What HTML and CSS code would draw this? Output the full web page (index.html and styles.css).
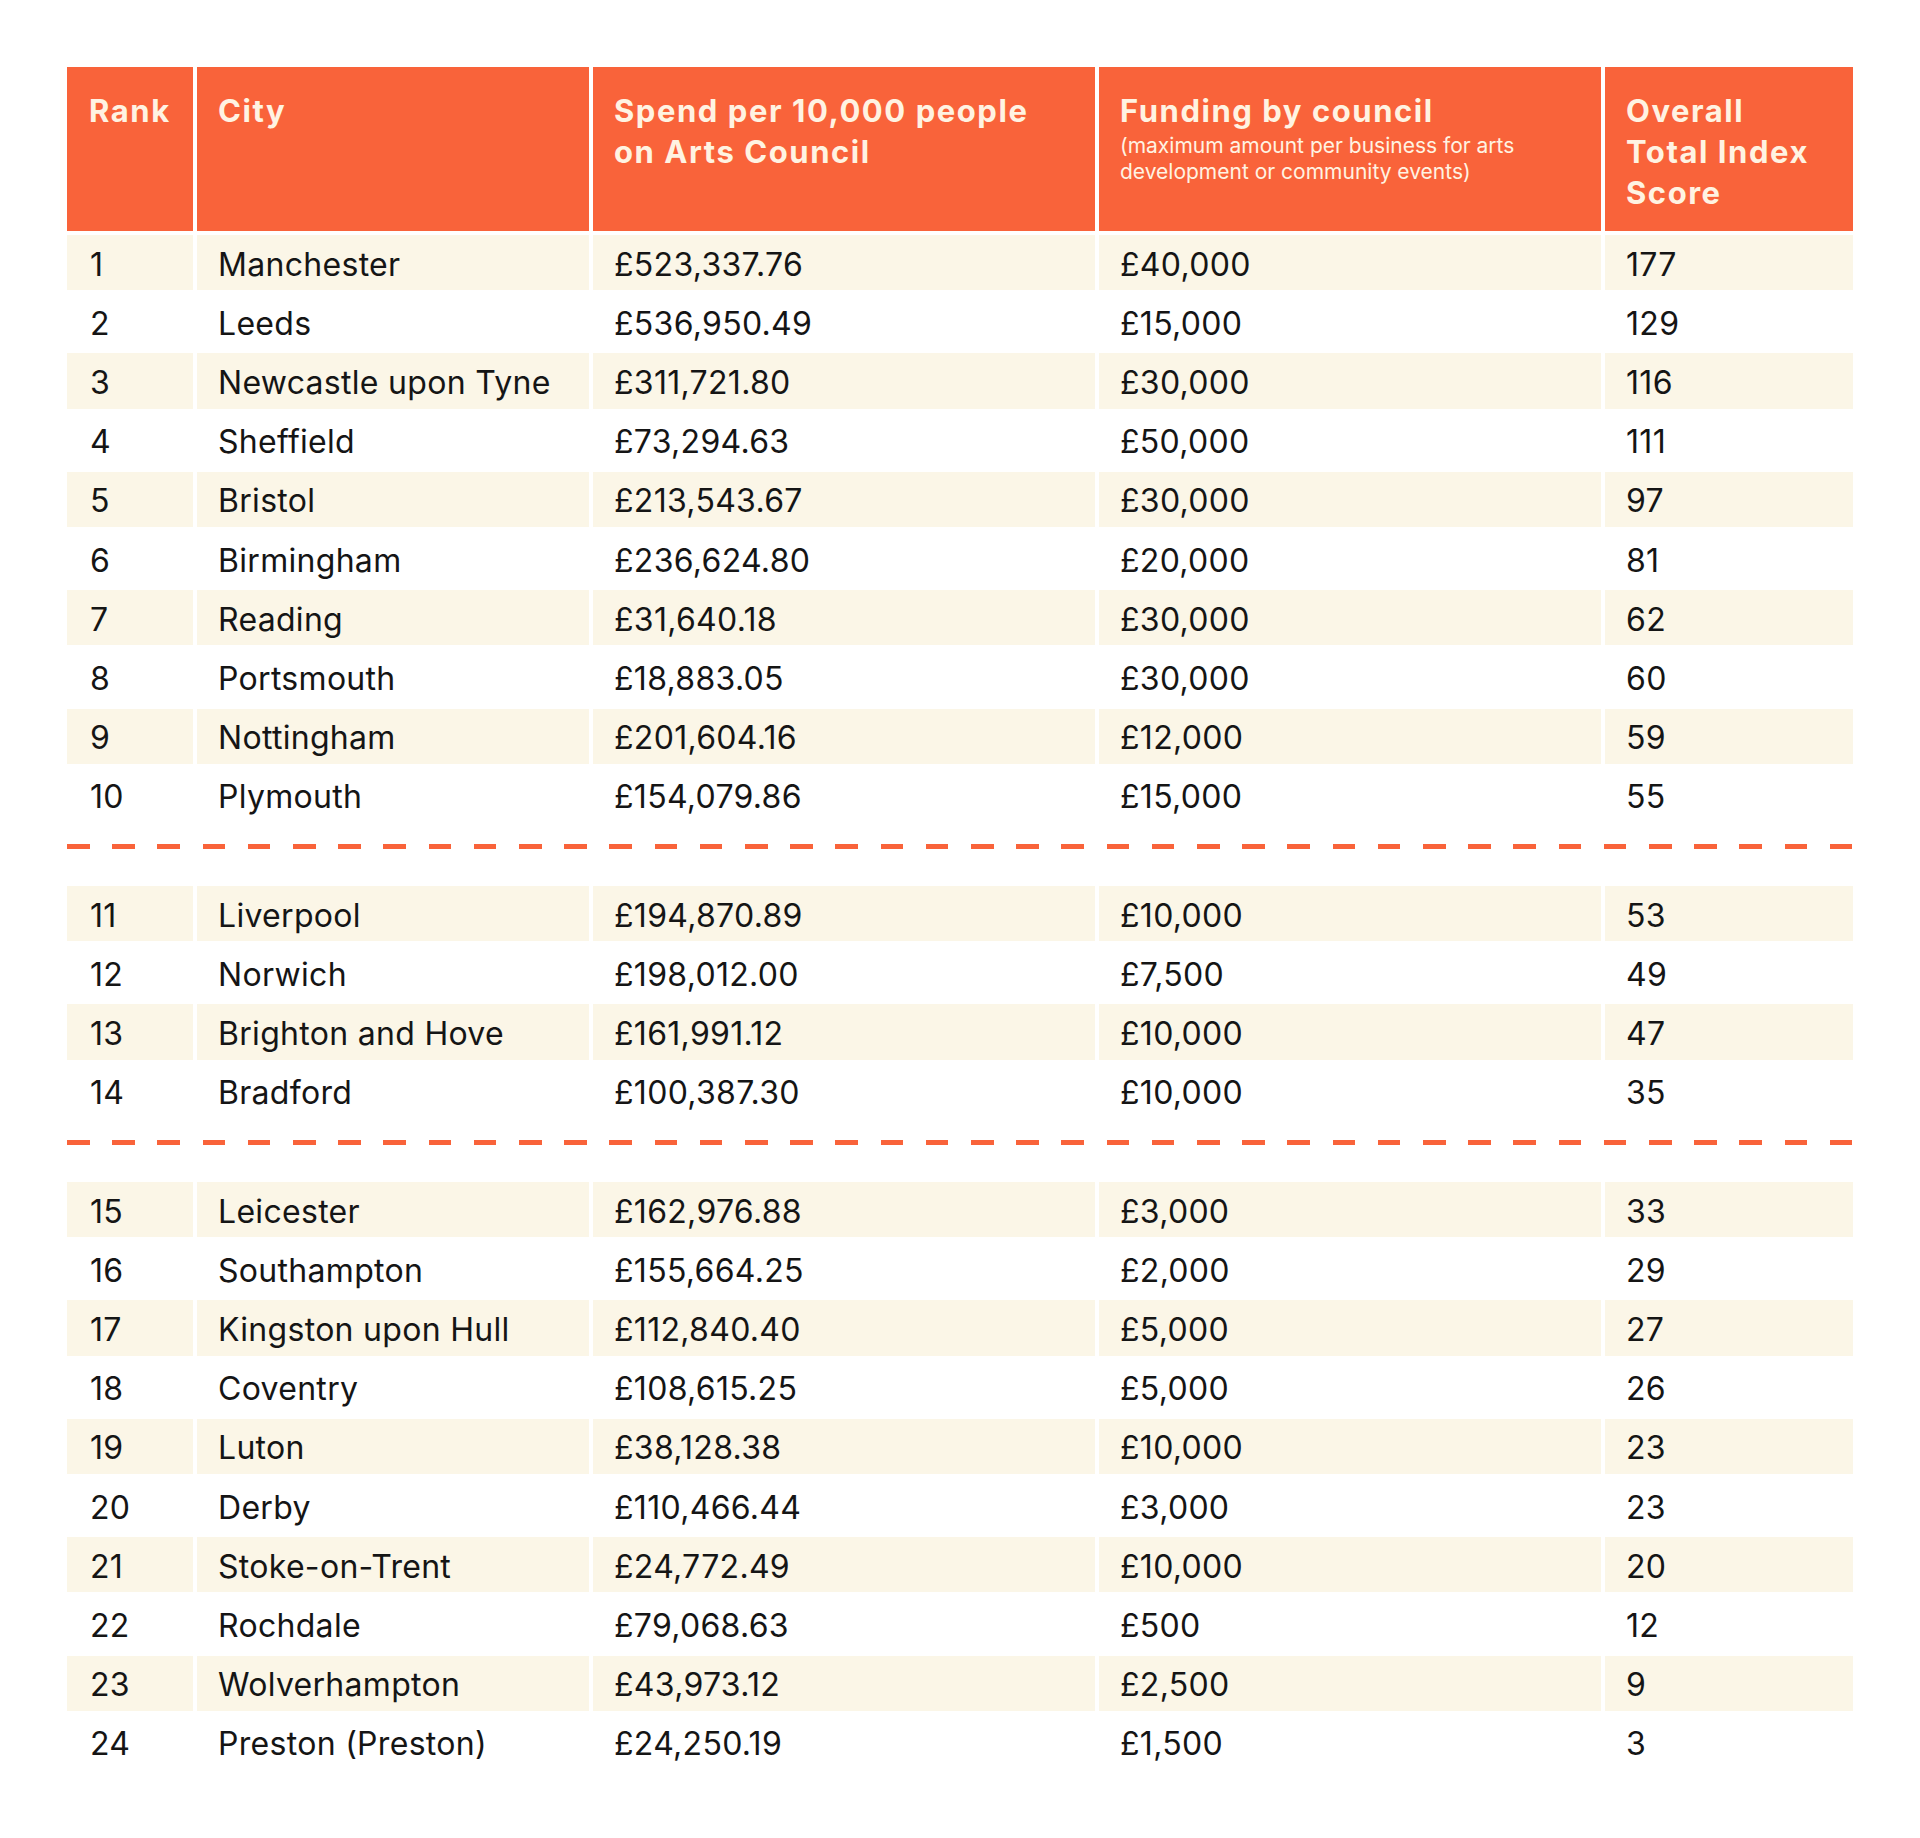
FILE: index.html
```html
<!DOCTYPE html>
<html lang="en">
<head>
<meta charset="utf-8">
<title>Arts funding index</title>
<link rel="stylesheet" href="styles.css">
</head>
<body>
<table class="index">
  <colgroup>
    <col class="c-rank"><col class="c-city"><col class="c-spend"><col class="c-fund"><col class="c-score">
  </colgroup>
  <thead>
    <tr>
      <th>Rank</th>
      <th>City</th>
      <th>Spend per 10,000 people<br>on Arts Council</th>
      <th>Funding by council<span class="note">(maximum amount per business for arts development or community events)</span></th>
      <th>Overall<br>Total Index<br>Score</th>
    </tr>
  </thead>
  <tbody class="group">
    <tr><td>1</td><td>Manchester</td><td>£523,337.76</td><td>£40,000</td><td>177</td></tr>
    <tr><td>2</td><td>Leeds</td><td>£536,950.49</td><td>£15,000</td><td>129</td></tr>
    <tr><td>3</td><td>Newcastle upon Tyne</td><td>£311,721.80</td><td>£30,000</td><td>116</td></tr>
    <tr><td>4</td><td>Sheffield</td><td>£73,294.63</td><td>£50,000</td><td>111</td></tr>
    <tr><td>5</td><td>Bristol</td><td>£213,543.67</td><td>£30,000</td><td>97</td></tr>
    <tr><td>6</td><td>Birmingham</td><td>£236,624.80</td><td>£20,000</td><td>81</td></tr>
    <tr><td>7</td><td>Reading</td><td>£31,640.18</td><td>£30,000</td><td>62</td></tr>
    <tr><td>8</td><td>Portsmouth</td><td>£18,883.05</td><td>£30,000</td><td>60</td></tr>
    <tr><td>9</td><td>Nottingham</td><td>£201,604.16</td><td>£12,000</td><td>59</td></tr>
    <tr><td>10</td><td>Plymouth</td><td>£154,079.86</td><td>£15,000</td><td>55</td></tr>
  </tbody>
  <tbody class="sep"><tr><td colspan="5"><div class="dash"></div></td></tr></tbody>
  <tbody class="group">
    <tr><td>11</td><td>Liverpool</td><td>£194,870.89</td><td>£10,000</td><td>53</td></tr>
    <tr><td>12</td><td>Norwich</td><td>£198,012.00</td><td>£7,500</td><td>49</td></tr>
    <tr><td>13</td><td>Brighton and Hove</td><td>£161,991.12</td><td>£10,000</td><td>47</td></tr>
    <tr><td>14</td><td>Bradford</td><td>£100,387.30</td><td>£10,000</td><td>35</td></tr>
  </tbody>
  <tbody class="sep"><tr><td colspan="5"><div class="dash"></div></td></tr></tbody>
  <tbody class="group">
    <tr><td>15</td><td>Leicester</td><td>£162,976.88</td><td>£3,000</td><td>33</td></tr>
    <tr><td>16</td><td>Southampton</td><td>£155,664.25</td><td>£2,000</td><td>29</td></tr>
    <tr><td>17</td><td>Kingston upon Hull</td><td>£112,840.40</td><td>£5,000</td><td>27</td></tr>
    <tr><td>18</td><td>Coventry</td><td>£108,615.25</td><td>£5,000</td><td>26</td></tr>
    <tr><td>19</td><td>Luton</td><td>£38,128.38</td><td>£10,000</td><td>23</td></tr>
    <tr><td>20</td><td>Derby</td><td>£110,466.44</td><td>£3,000</td><td>23</td></tr>
    <tr><td>21</td><td>Stoke-on-Trent</td><td>£24,772.49</td><td>£10,000</td><td>20</td></tr>
    <tr><td>22</td><td>Rochdale</td><td>£79,068.63</td><td>£500</td><td>12</td></tr>
    <tr><td>23</td><td>Wolverhampton</td><td>£43,973.12</td><td>£2,500</td><td>9</td></tr>
    <tr><td>24</td><td>Preston (Preston)</td><td>£24,250.19</td><td>£1,500</td><td>3</td></tr>
  </tbody>
</table>
</body>
</html>
```

FILE: styles.css
```css
html, body {
  margin: 0;
  padding: 0;
  background: #ffffff;
}

body {
  font-family: Inter, "Liberation Sans", sans-serif;
  color: #151515;
  min-height: 1838px;
}

.index {
  table-layout: fixed;
  width: 1794px;
  margin: 63px auto 0;
  border-collapse: separate;
  border-spacing: 4px;
}

.c-rank { width: 126px; }
.c-city { width: 392px; }
.c-spend { width: 502px; }
.c-fund { width: 502px; }
.c-score { width: 248px; }

.index th {
  height: 164px;
  box-sizing: border-box;
  padding: 23px 10px 0 21px;
  vertical-align: top;
  text-align: left;
  background: #f9633a;
  color: #fff3e2;
  font-weight: 700;
  font-size: 31px;
  line-height: 41px;
  letter-spacing: 0.05em;
  white-space: nowrap;
}

.index th:first-child {
  padding-left: 22px;
}

.index th .note {
  display: block;
  margin-top: 2px;
  font-weight: 400;
  font-size: 21px;
  line-height: 26px;
  letter-spacing: 0;
  white-space: normal;
}

.group td {
  height: 55.2px;
  box-sizing: border-box;
  padding: 3px 10px 0 21px;
  vertical-align: middle;
  font-size: 32px;
  font-weight: 400;
  letter-spacing: 0.3px;
  white-space: nowrap;
}

.group td:first-child {
  padding-left: 23px;
}

.group tr:nth-child(odd) td {
  background: #fbf6e7;
}

.sep td {
  height: 55.2px;
  padding: 0;
  vertical-align: top;
}

.dash {
  height: 5px;
  margin-top: 17px;
  background: repeating-linear-gradient(to right, #f9633a 0, #f9633a 22.6px, transparent 22.6px, transparent 45.2px);
}
```
